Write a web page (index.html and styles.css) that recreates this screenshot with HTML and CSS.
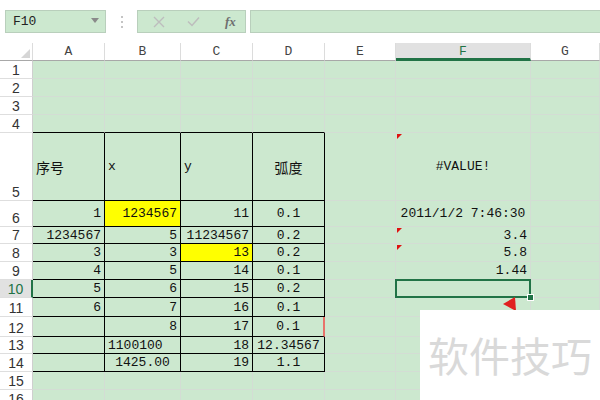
FILE: index.html
```html
<!DOCTYPE html>
<html>
<head>
    <link rel="stylesheet" href="styles.css">
</head>
<body>
    <div class="toolbar">
        <div class="namebox">
            <span>F10</span>
            <svg class="caret" width="8" height="5" viewBox="0 0 8 5"><polygon points="0,0 8,0 4,5" fill="#8a8a8a"/></svg>
        </div>
        <div class="dots"><i></i><i></i><i></i></div>
        <div class="fbuttons">
            <svg width="12" height="12" viewBox="0 0 12 12"><path d="M1 1 L11 11 M11 1 L1 11" stroke="#bdbdbd" stroke-width="1.4" fill="none"/></svg>
            <svg width="13" height="11" viewBox="0 0 13 11"><path d="M1 5.5 L5 9.5 L12 1.5" stroke="#bdbdbd" stroke-width="1.5" fill="none"/></svg>
            <span class="fx">fx</span>
        </div>
        <div class="finput"></div>
    </div>

    <div class="sheet">
        <!-- column headers -->
        <div class="h corner"><svg width="9" height="9" viewBox="0 0 9 9"><polygon points="9,0 9,9 0,9" fill="#d6d6d6"/></svg></div>
        <div class="h">A</div><div class="h">B</div><div class="h">C</div><div class="h">D</div><div class="h">E</div><div class="h hsel">F</div><div class="h">G</div>

        <div class="rh">1</div><div class="c"></div><div class="c"></div><div class="c"></div><div class="c"></div><div class="c"></div><div class="c"></div><div class="c"></div>
        <div class="rh">2</div><div class="c"></div><div class="c"></div><div class="c"></div><div class="c"></div><div class="c"></div><div class="c"></div><div class="c"></div>
        <div class="rh">3</div><div class="c"></div><div class="c"></div><div class="c"></div><div class="c"></div><div class="c"></div><div class="c"></div><div class="c"></div>
        <div class="rh">4</div><div class="c bt"></div><div class="c bt"></div><div class="c bt"></div><div class="c bt"></div><div class="c"></div><div class="c"></div><div class="c"></div>

        <div class="rh">5</div>
        <div class="c bx cjk">序号</div><div class="c bx">x</div><div class="c bx">y</div><div class="c bx m cjk">弧度</div>
        <div class="c"></div><div class="c m note">#VALUE!</div><div class="c"></div>

        <div class="rh">6</div>
        <div class="c bx r">1</div><div class="c bx r y">1234567</div><div class="c bx r">11</div><div class="c bx m">0.1</div>
        <div class="c"></div><div class="c m">2011/1/2 7:46:30</div><div class="c"></div>

        <div class="rh">7</div>
        <div class="c bx r">1234567</div><div class="c bx r">5</div><div class="c bx r">11234567</div><div class="c bx m">0.2</div>
        <div class="c"></div><div class="c r note">3.4</div><div class="c"></div>

        <div class="rh">8</div>
        <div class="c bx r">3</div><div class="c bx r">3</div><div class="c bx r y">13</div><div class="c bx m">0.2</div>
        <div class="c"></div><div class="c r note">5.8</div><div class="c"></div>

        <div class="rh">9</div>
        <div class="c bx r">4</div><div class="c bx r">5</div><div class="c bx r">14</div><div class="c bx m">0.1</div>
        <div class="c"></div><div class="c r">1.44</div><div class="c"></div>

        <div class="rh rsel">10</div>
        <div class="c bx r">5</div><div class="c bx r">6</div><div class="c bx r">15</div><div class="c bx m">0.2</div>
        <div class="c"></div><div class="c sel"></div><div class="c"></div>

        <div class="rh">11</div>
        <div class="c bx r">6</div><div class="c bx r">7</div><div class="c bx r">16</div><div class="c bx m">0.1</div>
        <div class="c"></div><div class="c"></div><div class="c"></div>

        <div class="rh">12</div>
        <div class="c bx"></div><div class="c bx r">8</div><div class="c bx r">17</div><div class="c bx m redge">0.1</div>
        <div class="c"></div><div class="c"></div><div class="c"></div>

        <div class="rh">13</div>
        <div class="c bx"></div><div class="c bx">1100100</div><div class="c bx r">18</div><div class="c bx m">12.34567</div>
        <div class="c"></div><div class="c"></div><div class="c"></div>

        <div class="rh">14</div>
        <div class="c bx"></div><div class="c bx m">1425.00</div><div class="c bx r">19</div><div class="c bx m">1.1</div>
        <div class="c"></div><div class="c"></div><div class="c"></div>

        <div class="rh">15</div><div class="c"></div><div class="c"></div><div class="c"></div><div class="c"></div><div class="c"></div><div class="c"></div><div class="c"></div>
        <div class="rh">16</div><div class="c"></div><div class="c"></div><div class="c"></div><div class="c"></div><div class="c"></div><div class="c"></div><div class="c"></div>
    </div>

    <svg class="pointer" width="14" height="14" viewBox="0 0 14 14"><polygon points="0,7 12,0 13,14" fill="#e02020"/></svg>

    <div class="watermark">软件技巧</div>
</body>
</html>
```

FILE: styles.css
```css
body {
    margin: 0;
    width: 600px;
    height: 400px;
    overflow: hidden;
    background: #fff;
    font-family: "Liberation Mono", monospace;
    font-size: 13px;
    color: #111;
    position: relative;
}
.toolbar {
    height: 43px;
    display: flex;
    align-items: flex-start;
    padding-top: 10px;
    box-sizing: border-box;
    padding-left: 5px;
}
.namebox {
    width: 101px;
    height: 23px;
    box-sizing: border-box;
    background: #cce8cf;
    border: 1px solid #b9cfbc;
    display: flex;
    align-items: center;
    justify-content: space-between;
    padding: 0 6px 0 7px;
    font-size: 13px;
    color: #222;
}
.caret {
    margin-top: -2px;
}
.dots {
    width: 31px;
    height: 23px;
    display: flex;
    flex-direction: column;
    align-items: center;
    justify-content: center;
    gap: 3px;
}
.dots i {
    width: 2px;
    height: 2px;
    background: #c4c4c4;
}
.fbuttons {
    width: 109px;
    height: 23px;
    box-sizing: border-box;
    background: #cce8cf;
    border: 1px solid #b9cfbc;
    display: flex;
    align-items: center;
    padding-left: 15px;
    gap: 22px;
}
.fx {
    font-family: "Liberation Serif", serif;
    font-style: italic;
    font-weight: bold;
    font-size: 13px;
    color: #6f6f6f;
    margin-left: 3px;
}
.finput {
    flex: 1;
    margin-left: 4px;
    height: 23px;
    box-sizing: border-box;
    background: #cce8cf;
    border: 1px solid #b9cfbc;
    border-right: none;
}
.sheet {
    display: grid;
    grid-template-columns: 33px 72px 76px 72px 72px 71px 135px 69px;
    grid-template-rows: 18px 18px 18px 18px 18px 68px 26px 17px 18px 18px 18px 19px 20px 17px 18px 18px 18px;
}
.sheet > div {
    box-sizing: border-box;
    display: flex;
    align-items: center;
    overflow: hidden;
    white-space: nowrap;
}
.h {
    background: #fff;
    justify-content: center;
    border-right: 1px solid #dcdcdc;
    border-bottom: 1px solid #a8a8a8;
    color: #444;
}
.corner {
    justify-content: flex-end;
    align-items: flex-end !important;
    padding: 0 2px 2px 0;
}
.hsel {
    background: #e1e1e1;
    color: #217346;
    border-bottom: 3px solid #217346;
    padding-top: 2px;
}
.rh {
    background: #fff;
    justify-content: center;
    align-items: flex-end !important;
    padding-bottom: 0;
    border-right: 1px solid #cfcfcf;
    border-bottom: 1px solid #dedede;
    font-family: "Liberation Sans", sans-serif;
    font-size: 14px;
    color: #333;
}
.rsel {
    background: #e1e1e1;
    color: #217346;
    border-right: 2px solid #217346;
}
.c {
    background: #cce8cf;
    border-right: 1px solid #d3ddd4;
    border-bottom: 1px solid #d3ddd4;
    padding: 0 3px 0 3px;
    position: relative;
}
.r {
    justify-content: flex-end;
}
.m {
    justify-content: center;
}
.y {
    background: #ffff00;
}
.bx {
    border-right-color: #000;
    border-bottom-color: #000;
}
.bt {
    border-bottom-color: #000;
}
.redge {
    border-right: 2px solid #e8736b;
}
.cjk {
    font-family: "Noto Sans CJK SC", sans-serif;
    font-size: 14px;
}
.note::before {
    content: "";
    position: absolute;
    top: 1px;
    left: 1px;
    border-top: 5px solid #e01010;
    border-right: 5px solid transparent;
}
.sel::after {
    content: "";
    position: absolute;
    top: -1px;
    left: -1px;
    right: -1px;
    bottom: -1px;
    border: 2px solid #217346;
}
.sel::before {
    content: "";
    position: absolute;
    right: -4px;
    bottom: -4px;
    width: 5px;
    height: 5px;
    background: #217346;
    border: 1px solid #fff;
    z-index: 2;
}
.sel {
    overflow: visible !important;
}
.pointer {
    position: absolute;
    left: 503px;
    top: 297px;
}
.watermark {
    position: absolute;
    left: 420px;
    top: 310px;
    width: 180px;
    height: 90px;
    background: #fff;
    color: #d9d9d9;
    font-family: "Noto Sans CJK SC", sans-serif;
    font-size: 41px;
    display: flex;
    align-items: center;
    padding-left: 8px;
    box-sizing: border-box;
    padding-bottom: 2px;
}
```
